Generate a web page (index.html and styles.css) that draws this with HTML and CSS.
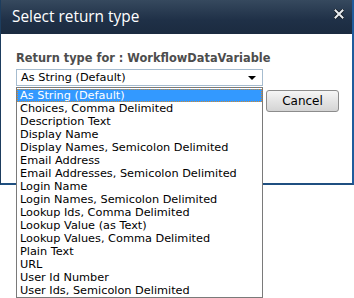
FILE: index.html
```html
<!DOCTYPE html>
<html lang="en">

<head>
    <meta charset="UTF-8">
    <title>Select return type</title>
    <link rel="stylesheet" href="styles.css">
</head>

<body>

    <div class="dialog">
        <div class="dialog-title">
            <span>Select return type</span>
            <svg class="close-icon" width="10" height="10" viewBox="0 0 10 10">
                <path d="M1.5 1.5 L8.5 8.5 M8.5 1.5 L1.5 8.5" stroke="#101820" stroke-width="3.6" stroke-linecap="square"/>
                <path d="M1.5 1.5 L8.5 8.5 M8.5 1.5 L1.5 8.5" stroke="#e8ecf0" stroke-width="2" stroke-linecap="square"/>
            </svg>
        </div>
        <div class="dialog-body">
            <div class="field-label">Return type for : WorkflowDataVariable</div>
            <div class="select-wrap">
                <div class="select-box">
                    <span>As String (Default)</span>
                    <span class="select-arrow"></span>
                </div>
                <ul class="select-list">
                    <li class="selected">As String (Default)</li>
                    <li>Choices, Comma Delimited</li>
                    <li>Description Text</li>
                    <li>Display Name</li>
                    <li>Display Names, Semicolon Delimited</li>
                    <li>Email Address</li>
                    <li>Email Addresses, Semicolon Delimited</li>
                    <li>Login Name</li>
                    <li>Login Names, Semicolon Delimited</li>
                    <li>Lookup Ids, Comma Delimited</li>
                    <li>Lookup Value (as Text)</li>
                    <li>Lookup Values, Comma Delimited</li>
                    <li>Plain Text</li>
                    <li>URL</li>
                    <li>User Id Number</li>
                    <li>User Ids, Semicolon Delimited</li>
                </ul>
            </div>
            <div class="button-row">
                <button class="btn">OK</button>
                <button class="btn">Cancel</button>
            </div>
        </div>
    </div>

</body>

</html>
```

FILE: styles.css
```css
html,
body {
    height: 100%;
}

body {
    margin: 0;
    min-height: 298px;
    background-color: #ffffff;
    font-family: 'DejaVu Sans', Verdana, sans-serif;
}

.dialog {
    width: 351px;
    height: 183px;
    border-left: 1px solid #1d3d5e;
    border-right: 2px solid #1f5c9c;
    border-bottom: 2px solid #1f4f80;
    background-color: #ffffff;
}

.dialog-title {
    height: 34px;
    display: flex;
    align-items: center;
    justify-content: space-between;
    padding: 0 8px 0 11px;
    background: linear-gradient(to bottom, #36495e, #1f3047 60%, #1b2b40);
    color: #ffffff;
    font-family: 'Open Sans', sans-serif;
    font-size: 15.4px;
    box-sizing: border-box;
}

.dialog-title span {
    margin-top: -1px;
}

.close-icon {
    margin-top: -6px;
}

.dialog-body {
    padding: 17px 0 0 15px;
}

.field-label {
    font-size: 11.4px;
    font-weight: bold;
    color: #4d4d4d;
    margin-bottom: 4px;
}

.select-wrap {
    position: relative;
    width: 247px;
}

.select-box {
    height: 17px;
    box-sizing: border-box;
    border: 1px solid #a6bccf;
    display: flex;
    align-items: center;
    justify-content: space-between;
    padding: 0 6px 0 4px;
    font-size: 11.3px;
    color: #000000;
}

.select-arrow {
    width: 0;
    height: 0;
    border-left: 4px solid transparent;
    border-right: 4px solid transparent;
    border-top: 4px solid #000000;
}

.select-list {
    position: absolute;
    top: 18px;
    left: 0;
    z-index: 2;
    width: 247px;
    margin: 0;
    padding: 1px 0 0 0;
    list-style: none;
    box-sizing: border-box;
    border: 1px solid #7a7a7a;
    border-bottom-width: 2px;
    background-color: #ffffff;
    font-size: 11.3px;
    color: #000000;
}

.select-list li {
    height: 13px;
    line-height: 13px;
    padding-left: 3px;
    white-space: nowrap;
}

.select-list li.selected {
    background-color: #3399ff;
    color: #ffffff;
    outline: 1px dotted #d08a30;
    outline-offset: -1px;
}

.button-row {
    display: flex;
    gap: 3px;
    margin: 4px 0 0 174px;
}

.btn {
    width: 73px;
    height: 22px;
    border: 1px solid #8c8c8c;
    border-radius: 3px;
    background: linear-gradient(to bottom, #f6f6f6, #e4e4e4 50%, #d4d4d4);
    font-family: 'DejaVu Sans', sans-serif;
    font-size: 12px;
    color: #000000;
    padding: 0;
}
```
